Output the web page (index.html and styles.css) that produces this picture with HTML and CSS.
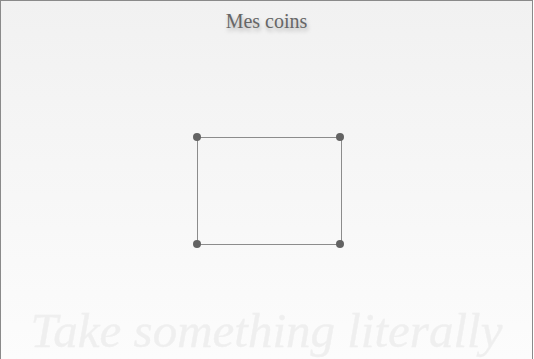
FILE: index.html
```html
<!DOCTYPE html>
<html>
<head>
<meta charset="utf-8">
<link rel="stylesheet" href="styles.css">
</head>
<body>
<div class="frame">
  <h1 class="title">Mes coins</h1>
  <div class="stage">
    <div class="box">
      <span class="dot tl"></span>
      <span class="dot tr"></span>
      <span class="dot bl"></span>
      <span class="dot br"></span>
    </div>
  </div>
  <div class="motto">Take something literally</div>
</div>
</body>
</html>
```
FILE: styles.css
```css
html, body {
  margin: 0;
  padding: 0;
  background: #ffffff;
  overflow: hidden;
}
.frame {
  box-sizing: border-box;
  width: 533px;
  height: 359px;
  border: 1px solid #8a8a8a;
  border-bottom: none;
  overflow: hidden;
  background: linear-gradient(to bottom, #f1f1f1 0%, #fcfcfc 100%);
  display: flex;
  flex-direction: column;
  align-items: center;
}
.title {
  margin: 8px 0 0 0;
  font-family: "Liberation Serif", "Times New Roman", serif;
  font-weight: normal;
  font-size: 20px;
  line-height: 24px;
  color: #666666;
  text-shadow: 1px 3px 4px rgba(0, 0, 0, 0.28);
}
.stage {
  margin-top: 104px;
  display: flex;
  justify-content: center;
  width: 100%;
  flex-shrink: 0;
}
.box {
  position: relative;
  box-sizing: border-box;
  width: 145px;
  height: 108px;
  margin-left: 5px;
  border: 1px solid #8c8c8c;
}
.dot {
  position: absolute;
  width: 8px;
  height: 8px;
  border-radius: 50%;
  background: #636363;
}
.tl { left: -5px; top: -5px; }
.tr { right: -3px; top: -5px; }
.bl { left: -5px; bottom: -4px; }
.br { right: -3px; bottom: -4px; }
.motto {
  margin-top: 61px;
  flex-shrink: 0;
  font-family: "Liberation Serif", "Times New Roman", serif;
  font-style: italic;
  font-size: 49px;
  line-height: 49px;
  color: #efefef;
  white-space: nowrap;
  -webkit-text-stroke: 0.4px #f0f0f0;
}
```
